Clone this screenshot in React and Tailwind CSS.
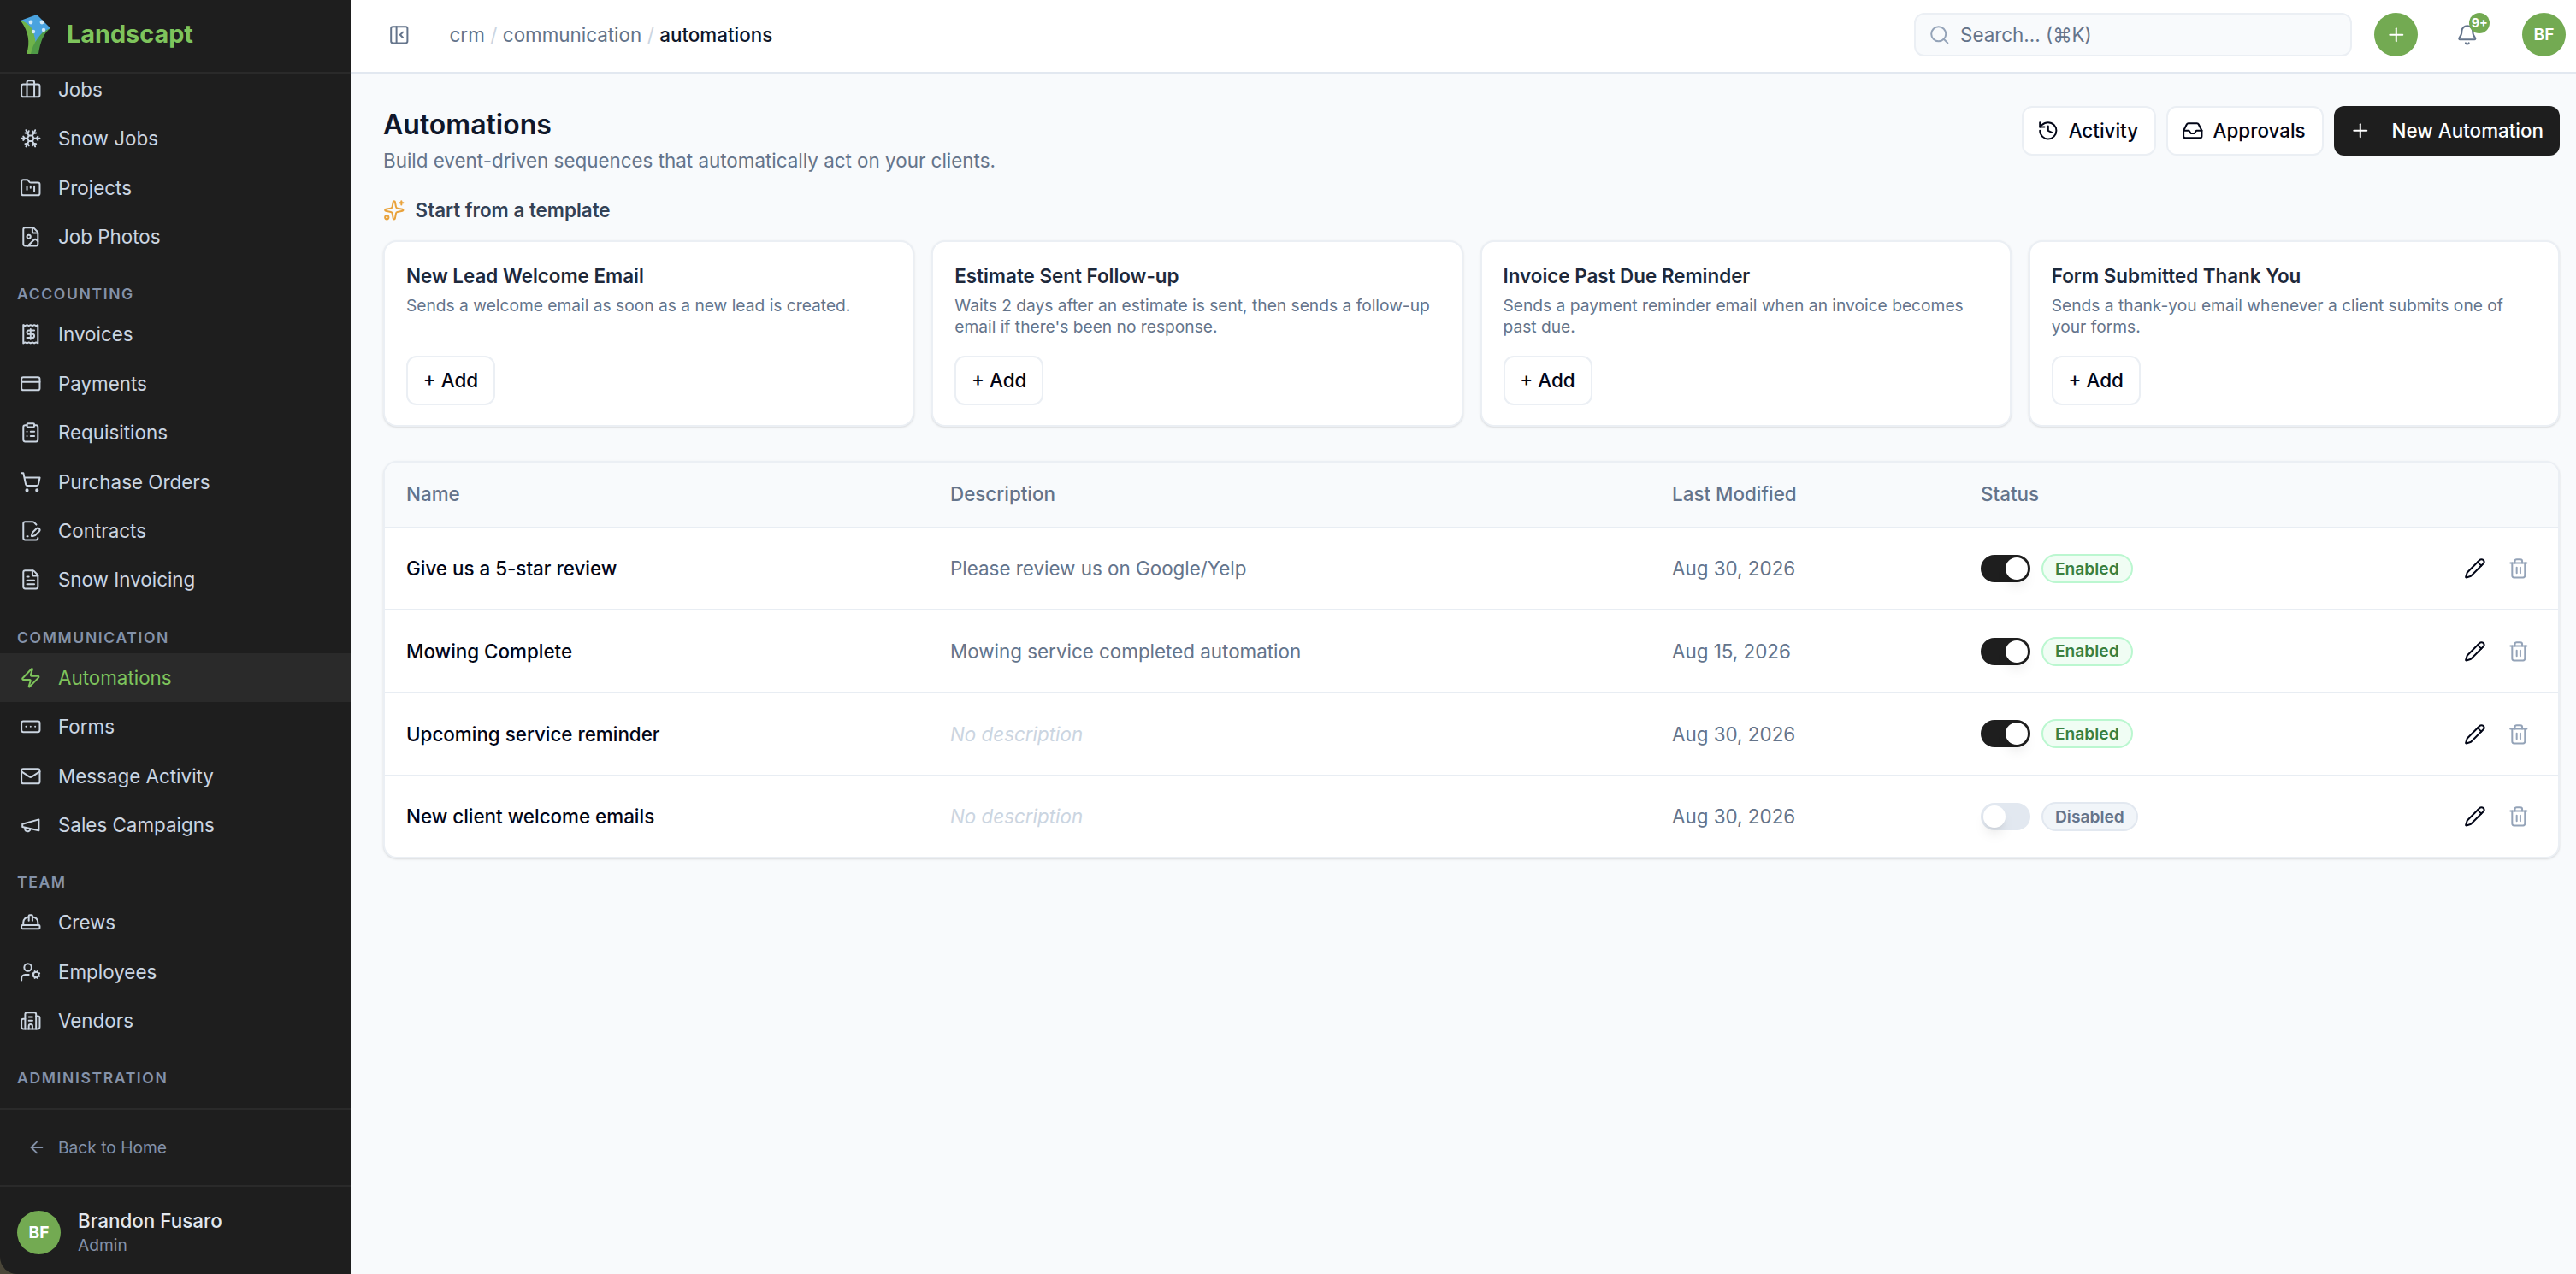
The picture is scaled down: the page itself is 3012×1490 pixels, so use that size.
import React from 'react';
import {
  Briefcase, Snowflake, FolderKanban, FileImage, Receipt, CreditCard, ClipboardList, ShoppingCart,
  FileSignature, FileText, Zap, RectangleEllipsis, Mail, HardHat, UserCog, Building2,
  ArrowLeft, PanelLeftClose, Search, Plus, Bell, History, Inbox, Sparkles, Pencil, Trash2,
} from 'lucide-react';

// older lucide megaphone, the package's current one has a different shape
const Megaphone = ({ size, strokeWidth, className }) => (
  <svg width={size} height={size} viewBox="0 0 24 24" fill="none" stroke="currentColor" strokeWidth={strokeWidth} strokeLinecap="round" strokeLinejoin="round" className={className}>
    <path d="m3 11 18-5v12L3 14v-3z" />
    <path d="M11.6 16.8a3 3 0 1 1-5.8-1.6" />
  </svg>
);

const navGroups = [
  {
    items: [
      { label: 'Jobs', icon: Briefcase },
      { label: 'Snow Jobs', icon: Snowflake },
      { label: 'Projects', icon: FolderKanban },
      { label: 'Job Photos', icon: FileImage },
    ],
  },
  {
    title: 'Accounting',
    items: [
      { label: 'Invoices', icon: Receipt },
      { label: 'Payments', icon: CreditCard },
      { label: 'Requisitions', icon: ClipboardList },
      { label: 'Purchase Orders', icon: ShoppingCart },
      { label: 'Contracts', icon: FileSignature },
      { label: 'Snow Invoicing', icon: FileText },
    ],
  },
  {
    title: 'Communication',
    items: [
      { label: 'Automations', icon: Zap, active: true },
      { label: 'Forms', icon: RectangleEllipsis },
      { label: 'Message Activity', icon: Mail },
      { label: 'Sales Campaigns', icon: Megaphone },
    ],
  },
  {
    title: 'Team',
    items: [
      { label: 'Crews', icon: HardHat },
      { label: 'Employees', icon: UserCog },
      { label: 'Vendors', icon: Building2 },
    ],
  },
  { title: 'Administration', items: [] },
];

const templates = [
  { title: 'New Lead Welcome Email', text: 'Sends a welcome email as soon as a new lead is created.' },
  { title: 'Estimate Sent Follow-up', text: "Waits 2 days after an estimate is sent, then sends a follow-up email if there's been no response." },
  { title: 'Invoice Past Due Reminder', text: 'Sends a payment reminder email when an invoice becomes past due.' },
  { title: 'Form Submitted Thank You', text: 'Sends a thank-you email whenever a client submits one of your forms.' },
];

const rows = [
  { name: 'Give us a 5-star review', description: 'Please review us on Google/Yelp', modified: 'Aug 30, 2026', enabled: true },
  { name: 'Mowing Complete', description: 'Mowing service completed automation', modified: 'Aug 15, 2026', enabled: true },
  { name: 'Upcoming service reminder', modified: 'Aug 30, 2026', enabled: true },
  { name: 'New client welcome emails', modified: 'Aug 30, 2026', enabled: false },
];

const Logo = () => (
  <svg viewBox="0 0 36 46" className="w-[36px] h-[46px] shrink-0">
    <path d="M0 7 L19 0 L35 16 Q26 21 22 34 L14 34 Q12 18 0 7 Z" fill="#4aa3df" />
    <path d="M0 7 Q8 9 13 16 Q18 26 19 46 L7 46 Q14 26 0 7 Z" fill="#6fb34a" />
    <path d="M35 16 Q24 24 21 46 L12 46 Q14 36 20 28 Q26 19 35 16 Z" fill="#4f9a46" />
    <g fill="#cfe8f7">
      <circle cx="12" cy="9" r="2.4" />
      <circle cx="25" cy="9" r="2.4" />
      <circle cx="15" cy="20" r="2.2" />
      <circle cx="27" cy="18" r="2.2" />
    </g>
  </svg>
);

const Sidebar = () => (
  <aside className="w-[410px] shrink-0 h-full bg-[#1e1e1e] flex flex-col rounded-bl-[20px]">
    <div className="h-[86px] shrink-0 border-b-2 border-[#2a2a2a] flex items-center gap-[18px] pl-[24px] pb-[4px]">
      <Logo />
      <span className="text-[28.8px] font-bold text-[#7ec45c]">Landscapt</span>
    </div>
    <nav className="h-[1210px] shrink-0 overflow-hidden">
      <div className="-mt-[10px]">
        {navGroups.map((group, i) => (
          <div key={i} className="mb-[19px]">
            {group.title && (
              <div className="h-[38px] pl-[20px] pt-[2px] flex items-center text-[17.6px] font-semibold uppercase tracking-[1.6px] text-[#8492a9]">
                {group.title}
              </div>
            )}
            {group.items.map((item) => (
              <div
                key={item.label}
                className={`h-[57.4px] flex items-center gap-[19.5px] pl-[22.9px] text-[22.4px] ${item.active ? 'bg-[#2a2a2a] text-[#7ec45c]' : 'text-[#cbd5e1]'}`}
              >
                <item.icon size={25.6} strokeWidth={1.875} className="shrink-0" />
                {item.label}
              </div>
            ))}
          </div>
        ))}
      </div>
    </nav>
    <div className="h-[90px] shrink-0 border-t-2 border-[#2a2a2a] flex items-center gap-[14px] pl-[32px] text-[19.2px] text-[#8492a9]">
      <ArrowLeft size={22} />
      Back to Home
    </div>
    <div className="flex-1 border-t-2 border-[#2a2a2a] flex items-center gap-[20px] pl-[20px] pt-[5px]">
      <div className="w-[51px] h-[51px] rounded-full bg-[#73aa52] flex items-center justify-center text-[19.2px] font-bold text-white">BF</div>
      <div>
        <div className="text-[22.4px] leading-[28px] font-[550] text-[#e2e8f0]">Brandon Fusaro</div>
        <div className="text-[19.2px] leading-[28px] text-[#8492a9]">Admin</div>
      </div>
    </div>
  </aside>
);

const Header = () => (
  <header className="h-[86px] shrink-0 bg-white border-b-2 border-[#e2e8f0] flex items-center pl-[44.2px] pr-[12px] pb-[3px]">
    <PanelLeftClose size={25.6} strokeWidth={1.875} className="text-[#64748b]" />
    <div className="ml-[45.8px] flex items-center gap-[6.5px] text-[22.4px] text-[#64748b]">
      <span>crm</span>
      <span className="text-[#cbd5e1]">/</span>
      <span>communication</span>
      <span className="text-[#cbd5e1]">/</span>
      <span className="font-medium text-[#0f172a]">automations</span>
    </div>
    <div className="ml-auto w-[512px] h-[51px] rounded-[12px] bg-[#f8fafc] border-2 border-[#ebeff4] flex items-center gap-[11px] pl-[15.4px] text-[22.4px] text-[#64748b]">
      <Search size={25.6} strokeWidth={1.875} className="text-[#94a3b8]" />
      Search... (⌘K)
    </div>
    <div className="ml-[26px] w-[51px] h-[51px] rounded-full bg-[#73aa52] flex items-center justify-center text-white">
      <Plus size={25.6} strokeWidth={1.875} />
    </div>
    <div className="relative ml-[45.2px] w-[25.6px] h-[25.6px] text-[#64748b]">
      <Bell size={25.6} strokeWidth={1.875} />
      <span className="absolute -top-[13px] left-[15px] w-[24px] h-[24px] rounded-full bg-[#73aa52] flex items-center justify-center text-[14.4px] font-bold text-white">9+</span>
    </div>
    <div className="ml-[51.2px] w-[51px] h-[51px] rounded-full bg-[#73aa52] flex items-center justify-center text-[19.2px] font-semibold text-white">BF</div>
  </header>
);

const OutlineButton = ({ icon: Icon, children }) => (
  <button className="h-[58px] pl-[16px] pr-[19px] rounded-[12px] bg-white border-2 border-[#ebeff4] flex items-center gap-[11px] text-[22.4px] font-medium text-[#020617]">
    <Icon size={25.6} strokeWidth={1.875} />
    {children}
  </button>
);

const TemplateCard = ({ title, text }) => (
  <div className="h-[218px] bg-white rounded-[16px] border-2 border-[#ebeff4] shadow-sm px-[25px] pt-[22px] flex flex-col">
    <div className="text-[22.4px] leading-[36px] font-semibold text-[#1e293b]">{title}</div>
    <p className="mt-[4px] text-[19.2px] leading-[25px] text-[#64748b]">{text}</p>
    <button className="mt-auto mb-[23px] w-[104px] h-[58px] rounded-[12px] border-2 border-[#ebeff4] text-[22.4px] font-medium text-[#020617]">+ Add</button>
  </div>
);

const Toggle = ({ on }) => (
  <div className={`w-[58px] h-[32px] rounded-full p-[3px] flex ${on ? 'bg-[#1e1e1e] justify-end' : 'bg-[#e2e8f0] justify-start'}`}>
    <div className="w-[26px] h-[26px] rounded-full bg-white shadow-lg" />
  </div>
);

const Row = ({ name, description, modified, enabled }) => (
  <div className="h-[96.7px] grid grid-cols-[636px_844px_361px_1fr] items-center pl-[25px] border-t-2 border-[#e8edf3]">
    <div className="text-[22.4px] font-[550] text-[#020617]">{name}</div>
    {description
      ? <div className="text-[22.4px] text-[#64748b]">{description}</div>
      : <div className="text-[22.4px] italic text-[#cbd5e1]">No description</div>}
    <div className="text-[22.4px] text-[#64748b]">{modified}</div>
    <div className="flex items-center">
      <Toggle on={enabled} />
      <span className={`ml-[13px] h-[34px] px-[14px] rounded-full border-2 flex items-center text-[19.2px] font-semibold ${enabled ? 'bg-[#f0fdf4] border-[#bbf7d0] text-[#3a803f]' : 'bg-[#f1f5f9] border-[#e2e8f0] text-[#64748b]'}`}>
        {enabled ? 'Enabled' : 'Disabled'}
      </span>
      <Pencil size={25.6} strokeWidth={1.875} className="ml-auto text-[#020617]" />
      <Trash2 size={25.6} strokeWidth={1.875} className="ml-[25.4px] mr-[33px] text-[#94a3b8]" />
    </div>
  </div>
);

export default function App() {
  return (
    <div className="w-[3012px] h-[1490px] flex overflow-hidden bg-[#4a4638] font-['Inter',sans-serif]">
      <Sidebar />
      <div className="flex-1 flex flex-col bg-[#f8fafc]">
        <Header />
        <main className="pl-[38px] pr-[19px] pt-[37px]">
          <div className="flex justify-between items-start">
            <div>
              <h1 className="text-[32px] leading-[46px] font-semibold text-[#0f172a]">Automations</h1>
              <p className="text-[22.4px] leading-[38px] text-[#64748b]">Build event-driven sequences that automatically act on your clients.</p>
            </div>
            <div className="flex gap-[12px] mt-[1px]">
              <OutlineButton icon={History}>Activity</OutlineButton>
              <OutlineButton icon={Inbox}>Approvals</OutlineButton>
              <button className="h-[58px] pl-[18.7px] pr-[19px] rounded-[12px] bg-[#1e1e1e] flex items-center gap-[23.7px] text-[22.4px] font-medium text-white">
                <Plus size={25.6} strokeWidth={1.875} />
                New Automation
              </button>
            </div>
          </div>
          <div className="mt-[22px] flex items-center gap-[12px] text-[22.4px] font-semibold text-[#334155]">
            <Sparkles size={25.6} strokeWidth={1.875} className="text-[#e9a23b]" />
            Start from a template
          </div>
          <div className="mt-[18px] grid grid-cols-4 gap-[20px]">
            {templates.map((t) => <TemplateCard key={t.title} {...t} />)}
          </div>
          <div className="mt-[40px] bg-white rounded-[16px] border-2 border-[#ebeff4] shadow-sm overflow-hidden">
            <div className="h-[75px] grid grid-cols-[636px_844px_361px_1fr] items-center pl-[25px] bg-[#f8fafc] text-[22.4px] font-medium text-[#64748b]">
              <div>Name</div>
              <div>Description</div>
              <div>Last Modified</div>
              <div>Status</div>
            </div>
            {rows.map((r) => <Row key={r.name} {...r} />)}
          </div>
        </main>
      </div>
    </div>
  );
}
